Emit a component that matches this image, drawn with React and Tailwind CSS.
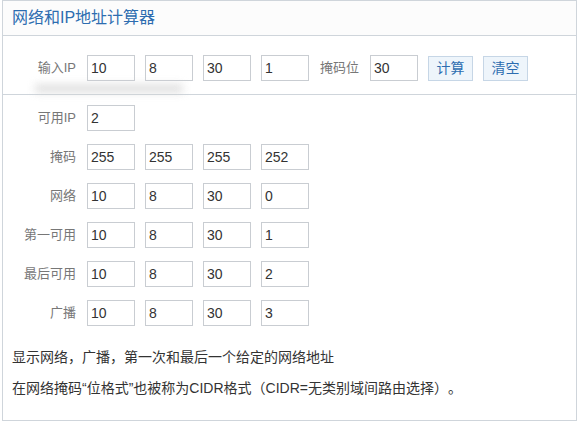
import React from "react";

const font = { fontFamily: '"Liberation Sans", "Noto Sans CJK SC", sans-serif' };

const Box = ({ value }) => (
  <input
    readOnly
    value={value}
    className="w-[48px] h-[26px] border border-[#c9cdd2] bg-white pl-[3px] text-[14px] text-[#333] outline-none"
  />
);

const Row = ({ label, values }) => (
  <div className="flex items-center">
    <div className="w-[73px] text-right text-[13px] text-[#777]">{label}</div>
    <div className="ml-[11px] flex gap-[10px]">
      {values.map((v, i) => (
        <Box key={i} value={v} />
      ))}
    </div>
  </div>
);

const rows = [
  ["掩码", ["255", "255", "255", "252"]],
  ["网络", ["10", "8", "30", "0"]],
  ["第一可用", ["10", "8", "30", "1"]],
  ["最后可用", ["10", "8", "30", "2"]],
  ["广播", ["10", "8", "30", "3"]],
];

export default function App() {
  return (
    <div className="w-[578px] h-[422px] bg-white" style={font}>
      <div className="ml-[2px] w-[575px] h-[421px] border border-[#cfd5db]">
        {/* Header */}
        <div className="h-[35px] flex items-center pl-[9px] border-b border-[#cfd5db] bg-[#fcfcfc]">
          <span className="text-[16px] text-[#2d6db0]">网络和IP地址计算器</span>
        </div>

        {/* Input row */}
        <div className="relative h-[59px] pt-[19px] border-b border-[#cfd5db]">
          <div className="flex items-center">
            <Row label="输入IP" values={["10", "8", "30", "1"]} />
            <span className="ml-[11px] text-[13px] text-[#777]">掩码位</span>
            <div className="ml-[11px]">
              <Box value="30" />
            </div>
            <button className="ml-[10px] w-[45px] h-[25px] border border-[#c6d6e6] bg-[#eef5fb] text-[14px] text-[#2d6db0]">
              计算
            </button>
            <button className="ml-[10px] w-[45px] h-[25px] border border-[#c6d6e6] bg-[#eef5fb] text-[14px] text-[#2d6db0]">
              清空
            </button>
          </div>
          {/* smudge under the input row */}
          <div className="absolute left-[32px] top-[49px] w-[148px] h-[7px] bg-[#d0d0d0] blur-[4px] opacity-80" />
        </div>

        {/* Results */}
        <div className="pt-[10px] flex flex-col gap-[13px]">
          <div className="flex items-center">
            <div className="w-[73px] text-right text-[13px] text-[#777]">可用IP</div>
            <div className="ml-[11px]">
              <Box value="2" />
            </div>
          </div>
          {rows.map(([label, values]) => (
            <Row key={label} label={label} values={values} />
          ))}
        </div>

        <div className="pl-[9px] pt-[21px] text-[14px] text-[#333] leading-[20px] [text-spacing-trim:space-all]">
          <p>显示网络，广播，第一次和最后一个给定的网络地址</p>
          <p className="mt-[11px]">在网络掩码“位格式”也被称为CIDR格式（CIDR=无类别域间路由选择）。</p>
        </div>
      </div>
    </div>
  );
}
